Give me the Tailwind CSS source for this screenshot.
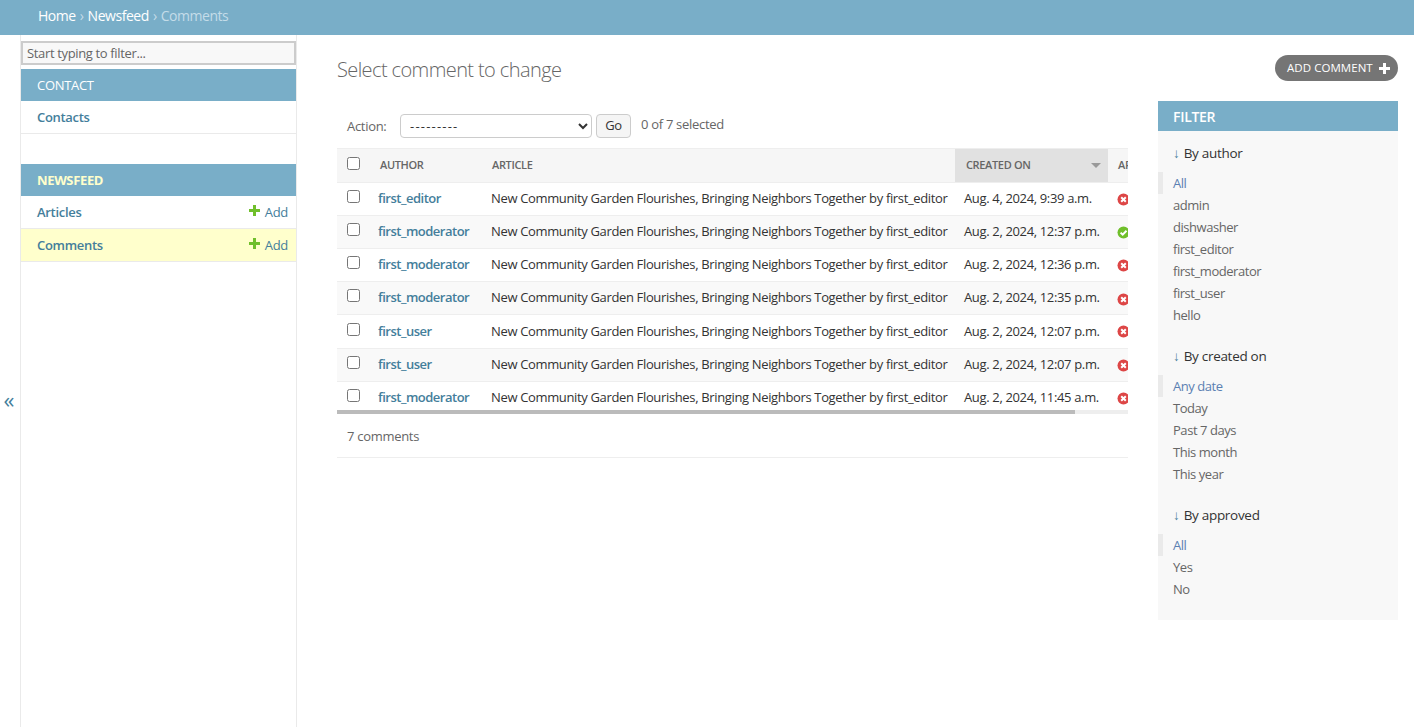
<!DOCTYPE html>
<html lang="en">

<head>
  <meta charset="UTF-8" />
  <title>Select comment to change</title>
  <script src="https://cdn.jsdelivr.net/npm/@tailwindcss/browser@4"></script>
  <meta name="viewport" content="width=device-width, initial-scale=1.0" />
</head>

<body class="h-[727px] overflow-hidden bg-white font-['Open_Sans',sans-serif] text-[13px] text-[#333]">

  <!-- Header -->
  <div class="h-[35px] bg-[#79aec8] pl-[38px] flex items-center text-[14px] tracking-[-0.45px] text-white pb-[4px]">
    <a>Home</a><span class="mx-[4px] text-[#c4dce8]">›</span><a>Newsfeed</a><span class="mx-[4px] text-[#c4dce8]">›</span><span class="text-[#c4dce8]">Comments</span>
  </div>

  <div class="flex h-[692px]">
    <!-- Toggle -->
    <div class="w-[21px] shrink-0 flex items-center justify-center pt-[36px] pr-[2px] text-[22px] text-[#447e9b] border-r border-[#eaeaea]">«</div>

    <!-- Sidebar -->
    <div class="w-[276px] shrink-0 border-r border-[#eaeaea] pt-[6px]">
      <input placeholder="Start typing to filter..." class="block w-[275px] h-[24px] border-2 border-[#ccc] bg-[#f8f8f8] px-[4px] text-[13px] tracking-[-0.35px] placeholder:text-[#666]" />

      <div class="mt-[4px] h-[32px] bg-[#79aec8] px-[16px] pt-[2px] flex items-center text-[13px] tracking-[-0.3px] text-white">CONTACT</div>
      <div class="h-[33px] border-b border-[#eaeaea] px-[16px] pt-[2px] flex items-center font-semibold tracking-[-0.3px] text-[#447e9b]">Contacts</div>

      <div class="mt-[30px] h-[32px] bg-[#79aec8] px-[16px] pt-[2px] flex items-center font-bold tracking-[-0.35px] text-[#ffc]">NEWSFEED</div>
      <div class="h-[33px] border-b border-[#eaeaea] pl-[16px] pr-[8px] pt-[2px] flex items-center justify-between">
        <span class="font-semibold tracking-[-0.3px] text-[#447e9b]">Articles</span>
        <span class="flex items-center gap-[5px] tracking-[-0.3px] text-[#447e9b]">
          <svg width="11" height="11" viewBox="0 0 11 11" class="mb-[5px]"><path fill="#70bf2b" d="M4 0h3v4h4v3H7v4H4V7H0V4h4z" /></svg>Add</span>
      </div>
      <div class="h-[33px] border-b border-[#eaeaea] bg-[#ffc] pl-[16px] pr-[8px] pt-[2px] flex items-center justify-between">
        <span class="font-semibold tracking-[-0.3px] text-[#447e9b]">Comments</span>
        <span class="flex items-center gap-[5px] tracking-[-0.3px] text-[#447e9b]">
          <svg width="11" height="11" viewBox="0 0 11 11" class="mb-[5px]"><path fill="#70bf2b" d="M4 0h3v4h4v3H7v4H4V7H0V4h4z" /></svg>Add</span>
      </div>
    </div>

    <!-- Main -->
    <div class="flex-1 min-w-0 pl-[40px] pr-[16px]">
      <div class="flex justify-between pt-[20px] h-[66px]">
        <h1 class="text-[20px] leading-[30px] font-light tracking-[-0.6px] text-[#666]">Select comment to change</h1>
        <a class="h-[26px] w-[123px] rounded-[13px] bg-[#757575] pl-[12px] flex items-center gap-[6px] text-[11.5px] font-medium tracking-[0.05px] text-white">ADD COMMENT
          <svg width="11" height="11" viewBox="0 0 11 11"><path fill="#fff" d="M4 0h3v4h4v3H7v4H4V7H0V4h4z" /></svg>
        </a>
      </div>

      <div class="flex gap-[30px]">
        <!-- Changelist -->
        <div class="w-[791px] shrink-0 overflow-hidden">
          <div class="h-[47px] pl-[10px] pt-[13px] flex items-start tracking-[-0.3px]">
            <span class="mt-[3px] w-[53px] text-[#666]">Action:</span>
            <select class="w-[192px] h-[24px] rounded-[4px] border border-[#ccc] bg-white pl-[5px] text-[13px] tracking-[1.2px] text-[#333]">
              <option>---------</option>
            </select>
            <button class="ml-[4px] h-[24px] w-[35px] rounded-[4px] border border-[#ccc] bg-[#f5f5f5] text-[#333]">Go</button>
            <span class="ml-[10px] mt-[1px] text-[#666]">0 of 7 selected</span>
          </div>

          <div class="relative w-[791px] overflow-hidden">
            <table class="w-[900px] table-fixed border-collapse tracking-[-0.35px]">
              <colgroup>
                <col class="w-[33px]" />
                <col class="w-[112px]" />
                <col class="w-[473px]" />
                <col class="w-[153px]" />
                <col class="w-[129px]" />
              </colgroup>
              <thead>
                <tr class="h-[34px] bg-[#f6f6f6] border-y border-[#eee] text-left text-[11px] font-semibold text-[#666]">
                  <th class="pl-[10px]"><input type="checkbox" class="block w-[13px] h-[13px] mb-[5px]" /></th>
                  <th class="pl-[10px] font-semibold">AUTHOR</th>
                  <th class="pl-[10px] font-semibold">ARTICLE</th>
                  <th class="pl-[11px] pr-[7px] bg-[#e1e1e1] font-semibold">
                    <div class="flex items-center justify-between">CREATED ON
                      <svg width="10" height="5" viewBox="0 0 10 5"><path fill="#999" d="M0 0h10L5 5z" /></svg>
                    </div>
                  </th>
                  <th class="pl-[10px] font-semibold">APPROVED</th>
                </tr>
              </thead>
              <tbody>
                <tr class="h-[33px] border-b border-[#eee]">
                  <td class="pl-[10px]"><input type="checkbox" class="block w-[13px] h-[13px] mb-[6px]" /></td>
                  <td class="pl-[8px] font-semibold tracking-[-0.5px] text-[#447e9b]">first_editor</td>
                  <td class="pl-[9px] whitespace-nowrap">New Community Garden Flourishes, Bringing Neighbors Together by first_editor</td>
                  <td class="pl-[9px] whitespace-nowrap">Aug. 4, 2024, 9:39 a.m.</td>
                  <td class="pl-[9px]"><svg width="13" height="13" viewBox="0 0 13 13"><circle cx="6.5" cy="6.5" r="6" fill="#dd4646" /><path stroke="#fff" stroke-width="2" d="M4.2 4.2l4.6 4.6M8.8 4.2l-4.6 4.6" /></svg></td>
                </tr>
                <tr class="h-[33px] border-b border-[#eee] bg-[#f9f9f9]">
                  <td class="pl-[10px]"><input type="checkbox" class="block w-[13px] h-[13px] mb-[6px]" /></td>
                  <td class="pl-[8px] font-semibold tracking-[-0.5px] text-[#447e9b]">first_moderator</td>
                  <td class="pl-[9px] whitespace-nowrap">New Community Garden Flourishes, Bringing Neighbors Together by first_editor</td>
                  <td class="pl-[9px] whitespace-nowrap">Aug. 2, 2024, 12:37 p.m.</td>
                  <td class="pl-[9px]"><svg width="13" height="13" viewBox="0 0 13 13"><circle cx="6.5" cy="6.5" r="6" fill="#70bf2b" /><path fill="none" stroke="#fff" stroke-width="2" d="M3.6 6.6l2.1 2.1 3.8-3.9" /></svg></td>
                </tr>
                <tr class="h-[33px] border-b border-[#eee]">
                  <td class="pl-[10px]"><input type="checkbox" class="block w-[13px] h-[13px] mb-[6px]" /></td>
                  <td class="pl-[8px] font-semibold tracking-[-0.5px] text-[#447e9b]">first_moderator</td>
                  <td class="pl-[9px] whitespace-nowrap">New Community Garden Flourishes, Bringing Neighbors Together by first_editor</td>
                  <td class="pl-[9px] whitespace-nowrap">Aug. 2, 2024, 12:36 p.m.</td>
                  <td class="pl-[9px]"><svg width="13" height="13" viewBox="0 0 13 13"><circle cx="6.5" cy="6.5" r="6" fill="#dd4646" /><path stroke="#fff" stroke-width="2" d="M4.2 4.2l4.6 4.6M8.8 4.2l-4.6 4.6" /></svg></td>
                </tr>
                <tr class="h-[33px] border-b border-[#eee] bg-[#f9f9f9]">
                  <td class="pl-[10px]"><input type="checkbox" class="block w-[13px] h-[13px] mb-[6px]" /></td>
                  <td class="pl-[8px] font-semibold tracking-[-0.5px] text-[#447e9b]">first_moderator</td>
                  <td class="pl-[9px] whitespace-nowrap">New Community Garden Flourishes, Bringing Neighbors Together by first_editor</td>
                  <td class="pl-[9px] whitespace-nowrap">Aug. 2, 2024, 12:35 p.m.</td>
                  <td class="pl-[9px] pt-[2px]"><svg width="13" height="13" viewBox="0 0 13 13"><circle cx="6.5" cy="6.5" r="6" fill="#dd4646" /><path stroke="#fff" stroke-width="2" d="M4.2 4.2l4.6 4.6M8.8 4.2l-4.6 4.6" /></svg></td>
                </tr>
                <tr class="h-[34px] border-b border-[#eee]">
                  <td class="pl-[10px]"><input type="checkbox" class="block w-[13px] h-[13px] mb-[4px]" /></td>
                  <td class="pl-[8px] font-semibold tracking-[-0.5px] text-[#447e9b]">first_user</td>
                  <td class="pl-[9px] whitespace-nowrap">New Community Garden Flourishes, Bringing Neighbors Together by first_editor</td>
                  <td class="pl-[9px] whitespace-nowrap">Aug. 2, 2024, 12:07 p.m.</td>
                  <td class="pl-[9px]"><svg width="13" height="13" viewBox="0 0 13 13"><circle cx="6.5" cy="6.5" r="6" fill="#dd4646" /><path stroke="#fff" stroke-width="2" d="M4.2 4.2l4.6 4.6M8.8 4.2l-4.6 4.6" /></svg></td>
                </tr>
                <tr class="h-[33px] border-b border-[#eee] bg-[#f9f9f9]">
                  <td class="pl-[10px]"><input type="checkbox" class="block w-[13px] h-[13px] mb-[6px]" /></td>
                  <td class="pl-[8px] font-semibold tracking-[-0.5px] text-[#447e9b]">first_user</td>
                  <td class="pl-[9px] whitespace-nowrap">New Community Garden Flourishes, Bringing Neighbors Together by first_editor</td>
                  <td class="pl-[9px] whitespace-nowrap">Aug. 2, 2024, 12:07 p.m.</td>
                  <td class="pl-[9px]"><svg width="13" height="13" viewBox="0 0 13 13"><circle cx="6.5" cy="6.5" r="6" fill="#dd4646" /><path stroke="#fff" stroke-width="2" d="M4.2 4.2l4.6 4.6M8.8 4.2l-4.6 4.6" /></svg></td>
                </tr>
                <tr class="h-[32px]">
                  <td class="pl-[10px]"><input type="checkbox" class="block w-[13px] h-[13px] mb-[4px]" /></td>
                  <td class="pl-[8px] font-semibold tracking-[-0.5px] text-[#447e9b]">first_moderator</td>
                  <td class="pl-[9px] whitespace-nowrap">New Community Garden Flourishes, Bringing Neighbors Together by first_editor</td>
                  <td class="pl-[9px] whitespace-nowrap">Aug. 2, 2024, 11:45 a.m.</td>
                  <td class="pl-[9px] pt-[2px]"><svg width="13" height="13" viewBox="0 0 13 13"><circle cx="6.5" cy="6.5" r="6" fill="#dd4646" /><path stroke="#fff" stroke-width="2" d="M4.2 4.2l4.6 4.6M8.8 4.2l-4.6 4.6" /></svg></td>
                </tr>
              </tbody>
            </table>
            <!-- scrollbar -->
            <div class="absolute inset-x-0 bottom-0 h-[4px] bg-[#eee]">
              <div class="h-full w-[738px] bg-[#bbb]"></div>
            </div>
          </div>

          <div class="h-[44px] border-b border-[#eee] pl-[10px] pt-[3px] flex items-center tracking-[-0.3px] text-[#666]">7 comments</div>
        </div>

        <!-- Filter -->
        <div class="w-[240px] h-[519px] shrink-0 bg-[#f8f8f8] tracking-[-0.45px]">
          <div class="h-[30px] bg-[#79aec8] pl-[15px] pt-[1px] flex items-center font-semibold text-[14px] tracking-[-0.3px] text-white">FILTER</div>
          <div class="pl-[15px] mt-[12px] h-[22px] text-[13.5px] tracking-[-0.3px] text-[#333]"><span class="mr-[1px] text-[#447e9b]">↓</span> By author</div>
          <ul class="mt-[7px] leading-[22px] text-[#666]">
            <li class="border-l-[5px] border-[#eaeaea] pl-[10px] text-[#5b80b2]">All</li>
            <li class="pl-[15px]">admin</li>
            <li class="pl-[15px]">dishwasher</li>
            <li class="pl-[15px]">first_editor</li>
            <li class="pl-[15px]">first_moderator</li>
            <li class="pl-[15px]">first_user</li>
            <li class="pl-[15px]">hello</li>
          </ul>
          <div class="pl-[15px] mt-[20px] h-[22px] text-[13.5px] tracking-[-0.3px] text-[#333]"><span class="mr-[1px] text-[#447e9b]">↓</span> By created on</div>
          <ul class="mt-[7px] leading-[22px] text-[#666]">
            <li class="border-l-[5px] border-[#eaeaea] pl-[10px] text-[#5b80b2]">Any date</li>
            <li class="pl-[15px]">Today</li>
            <li class="pl-[15px]">Past 7 days</li>
            <li class="pl-[15px]">This month</li>
            <li class="pl-[15px]">This year</li>
          </ul>
          <div class="pl-[15px] mt-[20px] h-[22px] text-[13.5px] tracking-[-0.3px] text-[#333]"><span class="mr-[1px] text-[#447e9b]">↓</span> By approved</div>
          <ul class="mt-[7px] leading-[22px] text-[#666]">
            <li class="border-l-[5px] border-[#eaeaea] pl-[10px] text-[#5b80b2]">All</li>
            <li class="pl-[15px]">Yes</li>
            <li class="pl-[15px]">No</li>
          </ul>
        </div>
      </div>
    </div>
  </div>

</body>

</html>
